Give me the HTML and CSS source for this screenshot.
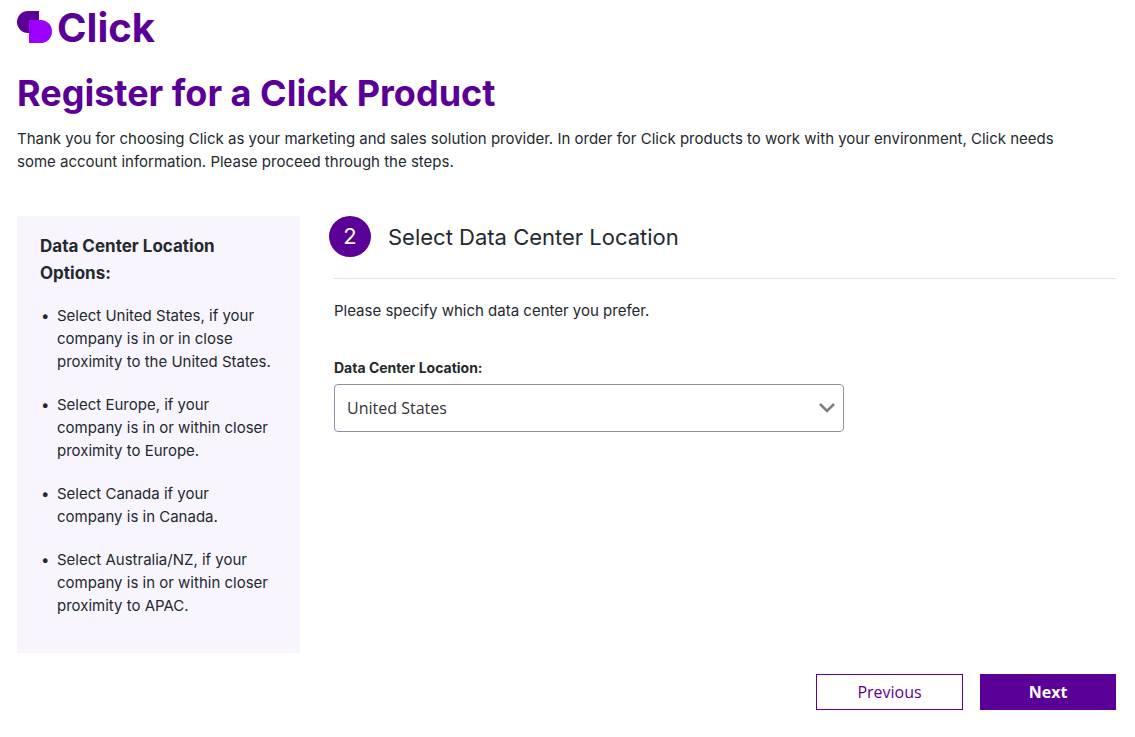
FILE: index.html
```html
<!DOCTYPE html>
<html lang="en">
<head>
    <meta charset="UTF-8">
    <meta name="viewport" content="width=device-width, initial-scale=1.0">
    <title>Register for a Click Product</title>
    <link rel="stylesheet" href="styles.css">
</head>
<body>
    <header>
        <a class="logo" href="#">
            <svg class="logo-mark" viewBox="0 0 35 32" aria-hidden="true">
                <path fill="#5a0096" d="M11 0H22V22H11A11 11 0 0 1 11 0Z"/>
                <path fill="#9b00ff" d="M12 9H23.500A11.500 11.500 0 0 1 23.500 32H12Z"/>
            </svg>
            <span>Click</span>
        </a>
        <h1>Register for a Click Product</h1>
        <p class="intro">Thank you for choosing Click as your marketing and sales solution provider. In order for Click products to work with your environment, Click needs some account information. Please proceed through the steps.</p>
    </header>
    <div class="content">
        <aside class="sidebar">
            <h2>Data Center Location Options:</h2>
            <ul>
                <li>Select United States, if your company is in or in close proximity to the United States.</li>
                <li>Select Europe, if your company is in or within closer proximity to Europe.</li>
                <li>Select Canada if your company is in Canada.</li>
                <li>Select Australia/NZ, if your company is in or within closer proximity to APAC.</li>
            </ul>
        </aside>
        <main>
            <div class="step">
                <span class="step-number">2</span>
                <h2>Select Data Center Location</h2>
            </div>
            <p class="hint">Please specify which data center you prefer.</p>
            <label for="location">Data Center Location:</label>
            <div class="select-box">
                <select id="location" name="location">
                    <option selected>United States</option>
                    <option>Europe</option>
                    <option>Canada</option>
                    <option>Australia/NZ</option>
                </select>
                <svg class="arrow" viewBox="0 0 16 10" aria-hidden="true">
                    <path fill="none" stroke="#808080" stroke-width="2.600" d="M1 1L8 8L15 1"/>
                </svg>
            </div>
        </main>
    </div>
    <div class="buttons">
        <button type="button" class="previous">Previous</button>
        <button type="button" class="next">Next</button>
    </div>
</body>
</html>
```
FILE: styles.css
```css
* {
    box-sizing: border-box;
}

body {
    margin: 0;
    padding: 7px 19px 27px 17px;
    background: #fff;
    color: #24292e;
    font-family: Inter, sans-serif;
    font-size: 15px;
    line-height: 23px;
}

h1, h2, p, ul {
    margin: 0;
}

.logo {
    display: flex;
    align-items: center;
    gap: 5px;
    height: 40px;
    color: #5a0096;
    font-size: 40px;
    font-weight: 700;
    text-decoration: none;
}

.logo-mark {
    width: 35px;
    height: 32px;
}

h1 {
    margin-top: 24px;
    color: #5a0096;
    font-size: 36px;
    font-weight: 700;
    line-height: 44px;
}

.intro {
    margin-top: 12px;
    padding-right: 30px;
}

.content {
    display: grid;
    grid-template-columns: 283px 1fr;
    gap: 34px;
    margin-top: 43px;
}

.sidebar {
    padding: 17px 27px 36px 23px;
    background: #f8f5ff;
}

.sidebar h2 {
    font-size: 17px;
    font-weight: 700;
    line-height: 27px;
}

.sidebar ul {
    margin-top: 17px;
    padding-left: 17px;
    list-style-type: "•\2002";
}

.sidebar li + li {
    margin-top: 20px;
}

.step {
    display: flex;
    align-items: center;
    gap: 17px;
    padding-bottom: 21px;
    border-bottom: 1px solid #e6e6e6;
}

.step-number {
    width: 42px;
    height: 41px;
    margin-left: -5px;
    border-radius: 50%;
    background: #5a0096;
    color: #fff;
    font-size: 22px;
    line-height: 41px;
    text-align: center;
}

.step h2 {
    font-size: 22px;
    font-weight: 400;
    line-height: 32px;
}

.hint {
    margin-top: 20px;
}

label {
    display: block;
    margin-top: 34px;
    font-size: 14px;
    font-weight: 700;
}

.select-box {
    position: relative;
    max-width: 510px;
    margin-top: 5px;
}

select {
    appearance: none;
    width: 100%;
    height: 48px;
    padding: 0 40px 0 12px;
    border: 1px solid #8a94a6;
    border-radius: 4px;
    background: #fff;
    color: #333;
    font-family: "Open Sans", sans-serif;
    font-size: 16px;
}

.arrow {
    position: absolute;
    top: 19px;
    right: 9px;
    width: 16px;
    height: 10px;
    pointer-events: none;
}

.buttons {
    display: flex;
    justify-content: flex-end;
    gap: 17px;
    margin-top: 21px;
}

button {
    height: 36px;
    border: 1px solid #5a0096;
    font-family: "Open Sans", sans-serif;
    font-size: 16px;
    cursor: pointer;
}

.previous {
    width: 147px;
    background: #fff;
    color: #5a0096;
}

.next {
    width: 136px;
    background: #5a0096;
    color: #fff;
    font-weight: 700;
}
```
